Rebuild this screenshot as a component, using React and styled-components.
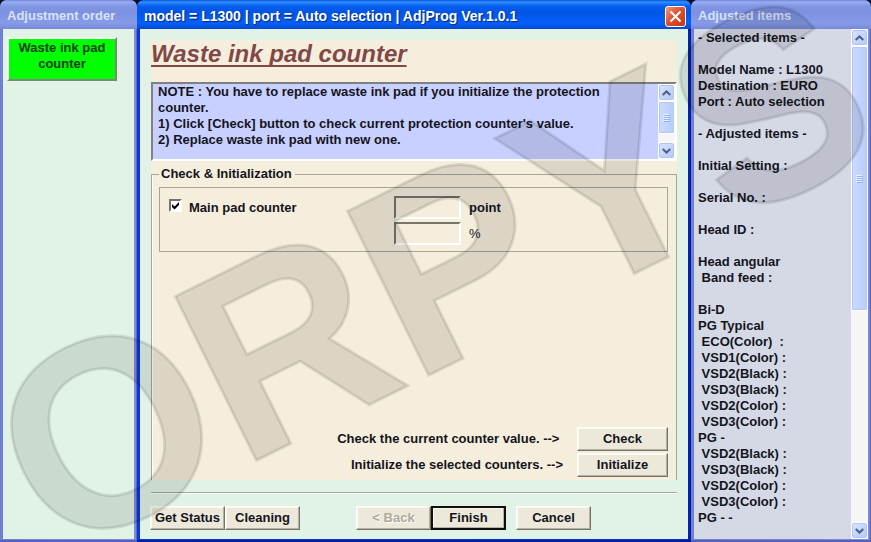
import { useState } from 'react';
import styled, { createGlobalStyle } from 'styled-components';

const GlobalStyle = createGlobalStyle`
  * {
    box-sizing: border-box;
  }

  body {
    margin: 0;
    background: #0a1030;
    color: #14141c;
    font-family: "Liberation Sans", Arial, sans-serif;
    font-size: 13px;
    font-weight: 700;
    line-height: 16px;
  }

  button, input {
    font: inherit;
    color: inherit;
  }
`

const Desktop = styled.div`
  position: relative;
  display: grid;
  grid-template-columns: 137px minmax(0, 1fr) 180px;
  min-height: 100vh;
`

const Window = styled.section`
  display: flex;
  flex-direction: column;
  min-width: 0;
  padding: 0 3px 3px;
  border-radius: 7px 7px 0 0;
  background: ${({ $active }) => ($active
    ? 'linear-gradient(90deg, #0a38d8, #0a30c8 99%, #001c98)'
    : 'linear-gradient(90deg, #6f7fd4, #7f8cdc 99%, #4a54b8)')};
  box-shadow: inset 0 -2px 0 ${({ $active }) => ($active ? '#00209c' : '#5560c0')};
`

const TitleBar = styled.header`
  display: flex;
  align-items: center;
  justify-content: space-between;
  height: 29px;
  margin: 0 -3px;
  padding: 3px 5px 0 7px;
  border-radius: 7px 7px 0 0;
  color: ${({ $active }) => ($active ? '#ffffff' : '#d8e2fa')};
  font-size: ${({ $active }) => ($active ? '14px' : '13px')};
  text-shadow: ${({ $active }) => ($active ? '1px 1px 1px #062878' : 'none')};
  background: ${({ $active }) => ($active
    ? 'linear-gradient(#0850d8, #3090ff 2px, #0860f0 6px, #0055e5 12px, #0560fa 23px, #0448d0)'
    : 'linear-gradient(#7088dc, #98acf0 2px, #8098e4 6px, #7c90e0 12px, #869ce8 23px, #7888d8)')};
`

const TitleText = styled.h2`
  margin: 0;
  font-size: inherit;
  white-space: pre;
`

const CloseButton = styled.button`
  display: grid;
  place-items: center;
  width: 21px;
  height: 21px;
  padding: 0;
  border: 1px solid #ffffff;
  border-radius: 3px;
  background: linear-gradient(135deg, #f09880, #e05030 45%, #c03818);
`

const Client = styled.div`
  display: flex;
  flex-direction: column;
  flex: 1;
  background: #e1f3e7;
`

const OrderList = styled.div`
  padding: 8px 17px 8px 4px;
`

const StepButton = styled.button`
  display: flex;
  justify-content: center;
  width: 100%;
  height: 44px;
  padding: 1px 4px;
  border: 2px solid;
  border-color: #f4fff4 #7c8878 #7c8878 #f4fff4;
  background: #00ff00;
  color: #084008;
`

const Sheet = styled.main`
  display: flex;
  flex-direction: column;
  flex: 1;
  margin: 11px 11px 0;
  background: #f5eedc;
`

const Heading = styled.h1`
  margin: 0;
  padding-bottom: 14px;
  color: #804848;
  font-size: 24px;
  font-style: italic;
  line-height: 28px;
  text-decoration: underline;
  text-decoration-thickness: 2px;
  text-decoration-skip-ink: none;
  text-underline-offset: 3px;
`

const Note = styled.div`
  display: flex;
  justify-content: space-between;
  height: 79px;
  border: 2px solid;
  border-color: #808080 #ffffff #ffffff #808080;
  background: #c8d0ff;
`

const NoteText = styled.p`
  margin: 0;
  padding: 0 5px;
  white-space: pre-line;
`

const ScrollTrack = styled.div`
  display: flex;
  flex-direction: column;
  flex: none;
  width: 17px;
  background: #f6f6f4;
`

const ScrollButton = styled.button`
  display: grid;
  place-items: center;
  height: 17px;
  padding: 0;
  border: 1px solid #ffffff;
  border-radius: 3px;
  background: linear-gradient(135deg, #d8e4ff, #b4c8f8);
  box-shadow: inset 0 0 0 1px #b0c4f4;
`

const ScrollThumb = styled.div`
  display: grid;
  place-items: center;
  height: ${({ $size }) => $size}px;
  border: 1px solid #ffffff;
  border-radius: 2px;
  background: linear-gradient(90deg, #ccdaff, #b8ccfc);
  box-shadow: inset 0 0 0 1px #b4c8f8;
`

const Spacer = styled.div`
  flex: 1;
`

const Group = styled.fieldset`
  display: flex;
  flex-direction: column;
  flex: 1;
  min-width: 0;
  margin: 5px 0 0;
  padding: 5px 8px 3px 7px;
  border: 1px solid #a8a498;
  border-bottom: 0;
  box-shadow: inset 1px 0 0 #ffffff;
`

const Legend = styled.legend`
  padding: 0 3px 0 2px;
`

const CounterBox = styled.div`
  display: grid;
  grid-template-columns: 217px 67px auto;
  grid-auto-rows: 23px;
  gap: 3px 8px;
  justify-content: start;
  align-items: center;
  height: 65px;
  padding: 8px 9px;
  border: 1px solid #a8a498;
`

const CheckLabel = styled.label`
  display: flex;
  align-items: center;
  gap: 7px;
`

const CheckBox = styled.input`
  appearance: none;
  width: 13px;
  height: 13px;
  margin: 0 0 4px;
  border: 2px solid;
  border-color: #707070 #ffffff #ffffff #707070;
  background: #ffffff;

  &:checked {
    background: #ffffff url("data:image/svg+xml,%3Csvg xmlns='http://www.w3.org/2000/svg' viewBox='0 0 9 9'%3E%3Cpath d='M1 3v3l2.5 2.5L8 4V1L3.5 5.500z'/%3E%3C/svg%3E") center / 9px 9px no-repeat;
  }
`

const ValueBox = styled.input`
  width: 100%;
  height: 23px;
  padding: 0 4px;
  border: 2px solid;
  border-color: #78746c #ffffff #ffffff #78746c;
  background: transparent;
`

const Unit = styled.label`
  font-weight: ${({ $light }) => ($light ? 400 : 700)};
`

const Actions = styled.div`
  display: grid;
  grid-template-columns: auto 91px;
  justify-content: end;
  justify-items: end;
  align-items: center;
  gap: 2px 14px;
`

const ActionText = styled.span`
  white-space: pre;
`

const PushButton = styled.button`
  width: ${({ $wide }) => ($wide ? '91px' : '75px')};
  height: 24px;
  padding: 0;
  border: ${({ $default }) => ($default ? '2px solid #101010' : '1px solid')};
  border-color: ${({ $default }) => ($default ? '#101010' : '#fffff8 #78746c #78746c #fffff8')};
  background: #ece8da;
  box-shadow: inset -1px -1px 0 #b4b0a2, inset 1px 1px 0 #faf8f0;
  white-space: nowrap;

  &:disabled {
    color: #aca899;
    text-shadow: 1px 1px 0 #ffffff;
  }
`

const Footer = styled.footer`
  display: flex;
  gap: 58px;
  margin: 12px 11px 0;
  padding: 13px 0 9px;
  border-top: 1px solid #a0a8a0;
  box-shadow: inset 0 1px 0 #ffffff;
`

const ButtonRow = styled.div`
  display: flex;
  gap: ${({ $gap }) => $gap || 0}px;
  margin-left: -1px;
`

const Report = styled.div`
  display: flex;
  justify-content: space-between;
  flex: 1;
  background: #d5d9e6;
`

const ReportText = styled.pre`
  margin: 0;
  padding: 1px 0 0 4px;
  font: inherit;
`

const Watermark = styled.svg`
  position: absolute;
  inset: 0;
  width: 100%;
  height: 100%;
  pointer-events: none;
`

const NOTE = `NOTE : You have to replace waste ink pad if you initialize the protection counter.
1) Click [Check] button to check current protection counter's value.
2) Replace waste ink pad with new one.`

const REPORT = [
  '- Selected items -',
  '',
  'Model Name : L1300',
  'Destination : EURO',
  'Port : Auto selection',
  '',
  '- Adjusted items -',
  '',
  'Initial Setting :',
  '',
  'Serial No. :',
  '',
  'Head ID :',
  '',
  'Head angular',
  ' Band feed :',
  '',
  'Bi-D',
  'PG Typical',
  ' ECO(Color)  :',
  ' VSD1(Color) :',
  ' VSD2(Black) :',
  ' VSD3(Black) :',
  ' VSD2(Color) :',
  ' VSD3(Color) :',
  'PG -',
  ' VSD2(Black) :',
  ' VSD3(Black) :',
  ' VSD2(Color) :',
  ' VSD3(Color) :',
  'PG - -',
]

const Chevron = ({ up }) => (
  <svg width="9" height="6" viewBox="0 0 9 6" fill="none" stroke="#4d6185" strokeWidth="2">
    <path d={up ? 'M0.700 5L4.500 1.400L8.300 5' : 'M0.700 1L4.500 4.600L8.300 1'} />
  </svg>
)

const ScrollBar = ({ thumb }) => (
  <ScrollTrack>
    <ScrollButton aria-label="Scroll up"><Chevron up /></ScrollButton>
    <ScrollThumb $size={thumb}>
      <svg width="7" height="8" viewBox="0 0 7 8">
        <path d="M0 .5h6M0 2.500h6M0 4.500h6M0 6.500h6" stroke="#eef4ff" />
        <path d="M1 1.500h6M1 3.500h6M1 5.500h6M1 7.500h6" stroke="#8cb0f8" />
      </svg>
    </ScrollThumb>
    <Spacer />
    <ScrollButton aria-label="Scroll down"><Chevron /></ScrollButton>
  </ScrollTrack>
)

const App = () => {
  const [mainPad, setMainPad] = useState(true)

  return (
    <>
      <GlobalStyle />
      <Desktop>
        <Window>
          <TitleBar><TitleText>Adjustment order</TitleText></TitleBar>
          <Client>
            <OrderList>
              <StepButton>Waste ink pad counter</StepButton>
            </OrderList>
          </Client>
        </Window>

        <Window $active>
          <TitleBar $active>
            <TitleText>model = L1300 | port = Auto selection | AdjProg Ver.1.0.1</TitleText>
            <CloseButton aria-label="Close">
              <svg width="13" height="13" viewBox="0 0 13 13" stroke="#ffffff" strokeWidth="2">
                <path d="M1.500 1.500L11.500 11.500M11.500 1.500L1.500 11.500" />
              </svg>
            </CloseButton>
          </TitleBar>

          <Client>
            <Sheet>
              <Heading>Waste ink pad counter</Heading>

              <Note>
                <NoteText>{NOTE}</NoteText>
                <ScrollBar thumb={33} />
              </Note>

              <Group>
                <Legend>Check &amp; Initialization</Legend>

                <CounterBox>
                  <CheckLabel>
                    <CheckBox
                      type="checkbox"
                      checked={mainPad}
                      onChange={(e) => setMainPad(e.target.checked)}
                    />
                    Main pad counter
                  </CheckLabel>
                  <ValueBox id="points" readOnly />
                  <Unit htmlFor="points">point</Unit>
                  <span />
                  <ValueBox id="percent" readOnly />
                  <Unit htmlFor="percent" $light>%</Unit>
                </CounterBox>

                <Spacer />

                <Actions>
                  <ActionText>{'Check the current counter value. --> '}</ActionText>
                  <PushButton $wide>Check</PushButton>
                  <ActionText>{'Initialize the selected counters. -->'}</ActionText>
                  <PushButton $wide>Initialize</PushButton>
                </Actions>
              </Group>
            </Sheet>

            <Footer>
              <ButtonRow>
                <PushButton>Get Status</PushButton>
                <PushButton>Cleaning</PushButton>
              </ButtonRow>
              <ButtonRow $gap={10}>
                <ButtonRow>
                  <PushButton disabled>&lt; Back</PushButton>
                  <PushButton $default>Finish</PushButton>
                </ButtonRow>
                <PushButton>Cancel</PushButton>
              </ButtonRow>
            </Footer>
          </Client>
        </Window>

        <Window>
          <TitleBar><TitleText>Adjusted items</TitleText></TitleBar>
          <Report>
            <ReportText>{REPORT.join('\n')}</ReportText>
            <ScrollBar thumb={265} />
          </Report>
        </Window>

        <Watermark viewBox="0 0 871 542" aria-hidden="true">
          <text
            transform="translate(55 560) rotate(-26.3)"
            fontFamily="Liberation Sans, Arial, sans-serif"
            fontSize="266"
            fontWeight="700"
            fill="#000000"
            fillOpacity="0.1"
            stroke="#000000"
            strokeOpacity="0.1"
            strokeWidth="3"
          >
            ORPYS
          </text>
        </Watermark>
      </Desktop>
    </>
  )
}

export default App
